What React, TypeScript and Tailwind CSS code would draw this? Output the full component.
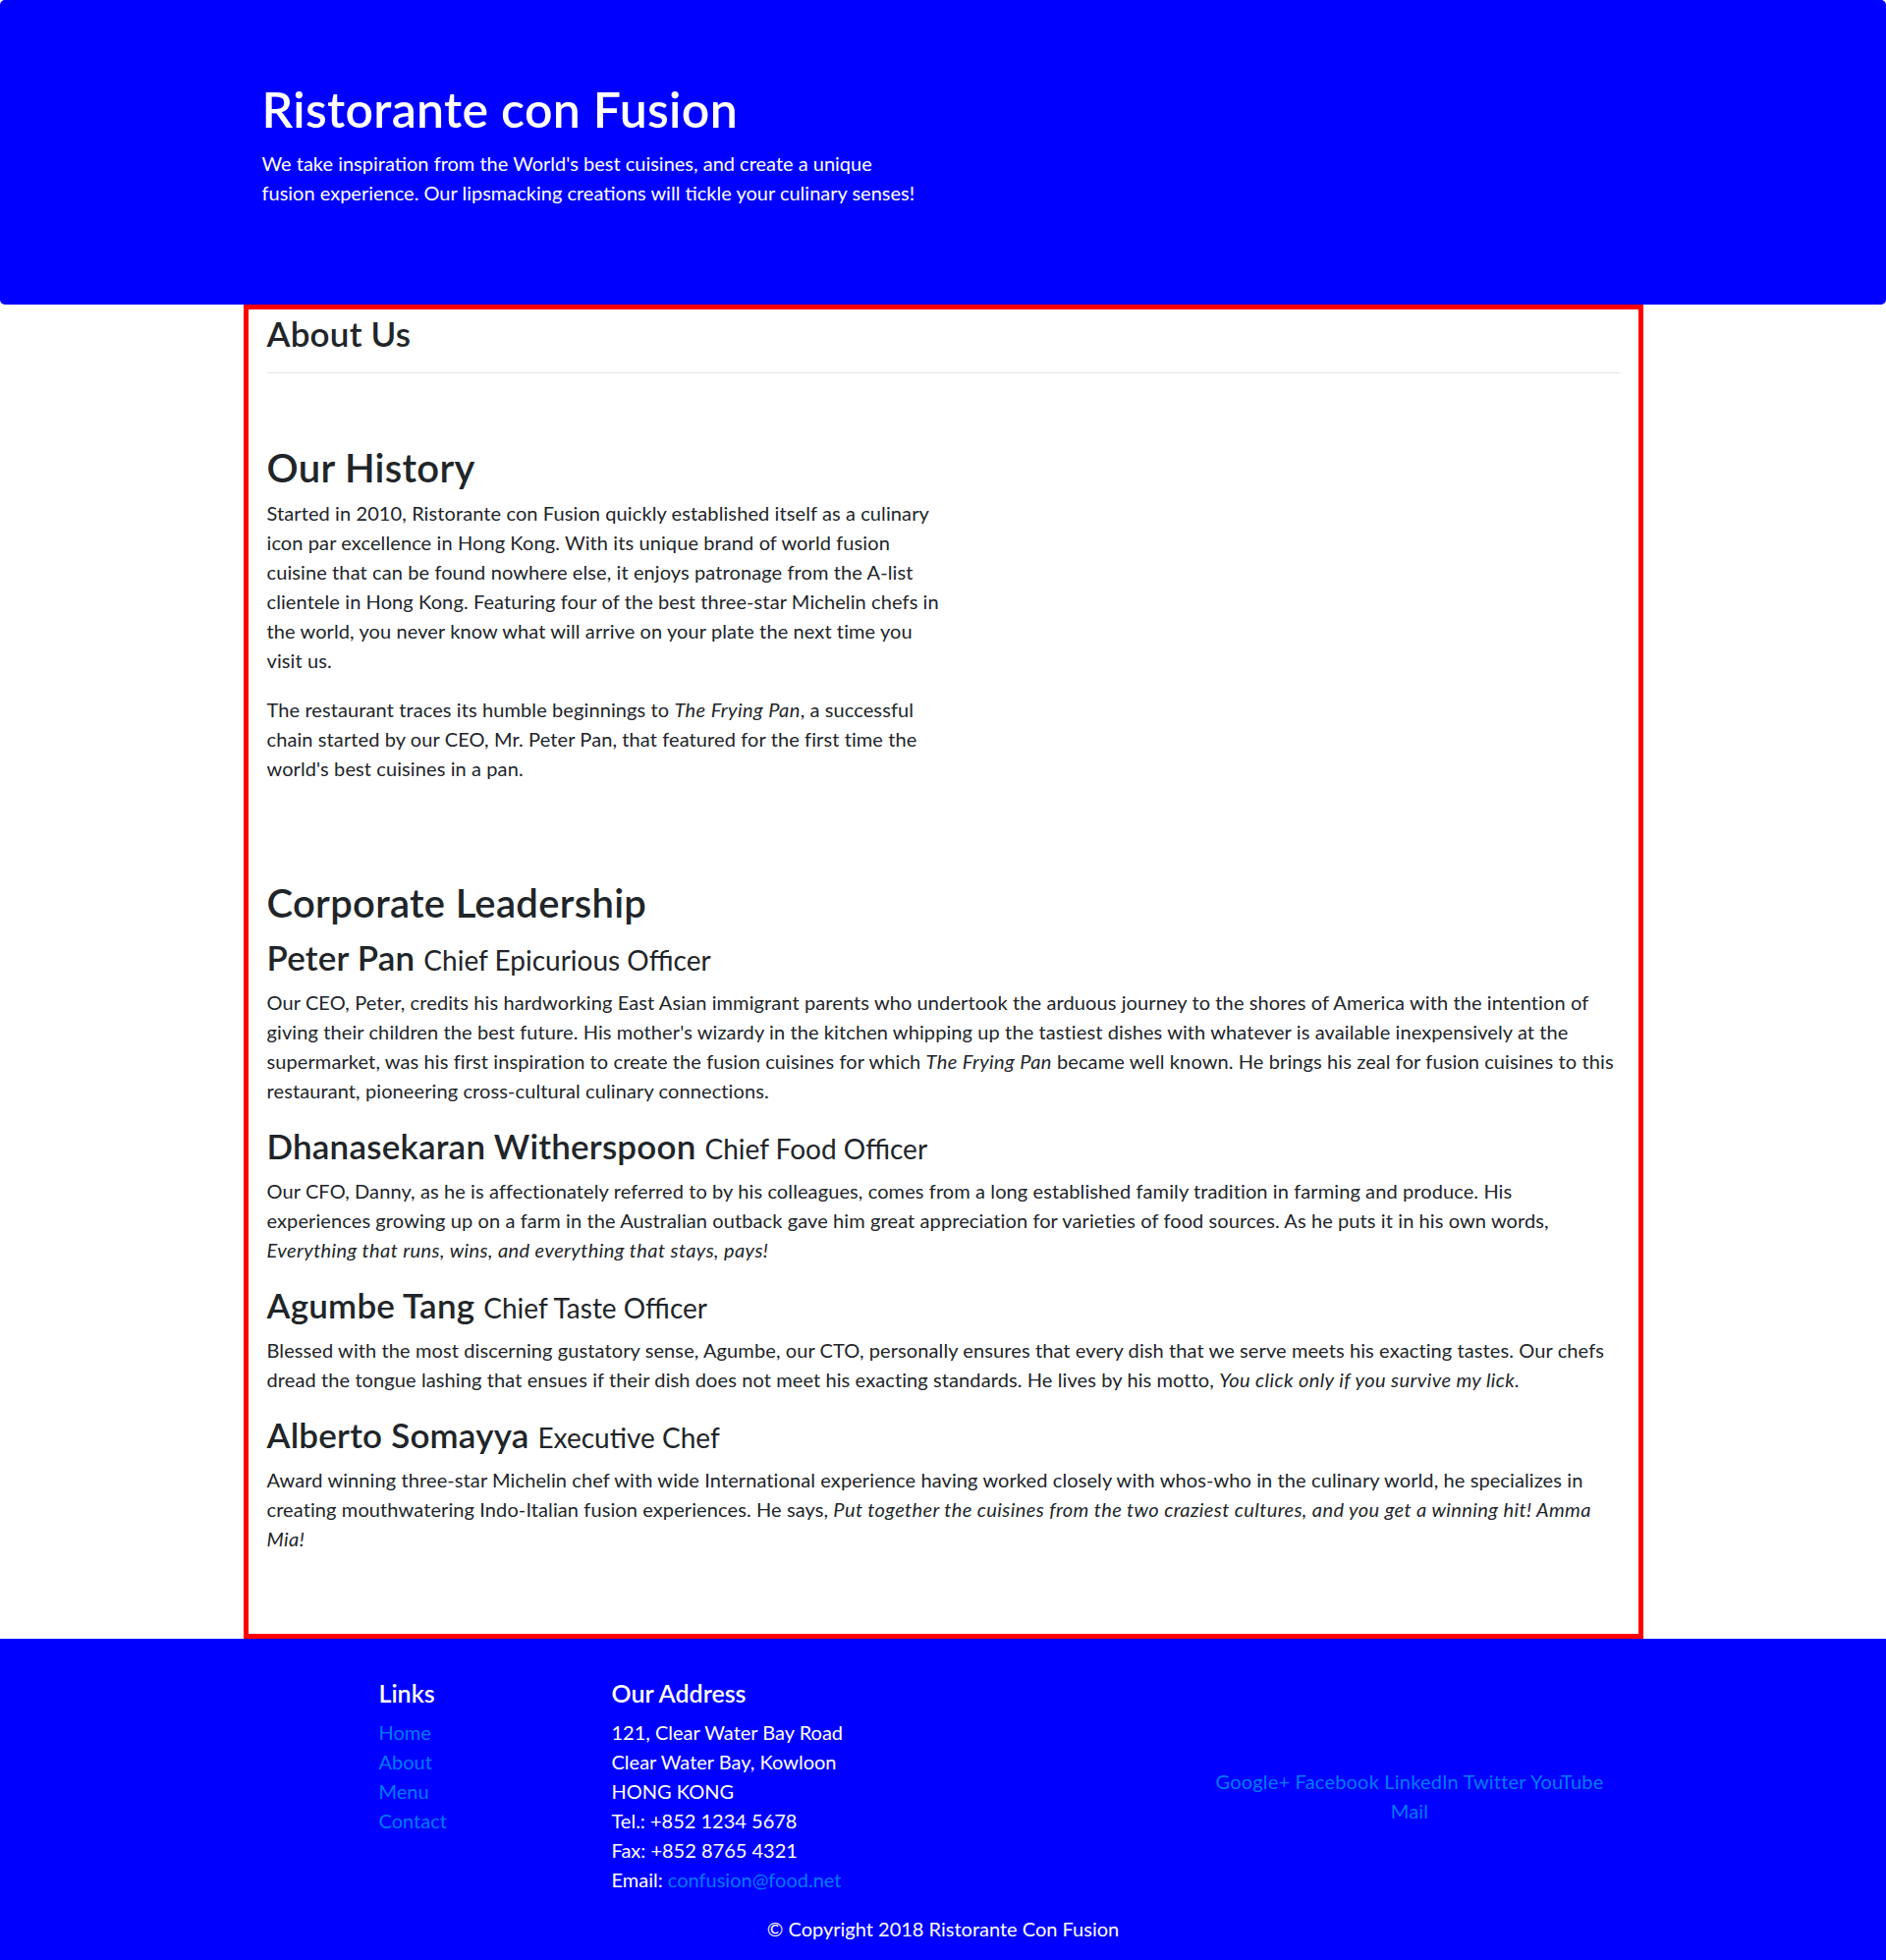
import React from "react";

const leaders = [
  {
    name: "Peter Pan",
    role: "Chief Epicurious Officer",
    text: (
      <>
        Our CEO, Peter, credits his hardworking East Asian immigrant parents who undertook the arduous journey to the
        shores of America with the intention of giving their children the best future. His mother's wizardy in the
        kitchen whipping up the tastiest dishes with whatever is available inexpensively at the supermarket, was his
        first inspiration to create the fusion cuisines for which <em>The Frying Pan</em> became well known. He brings
        his zeal for fusion cuisines to this restaurant, pioneering cross-cultural culinary connections.
      </>
    ),
  },
  {
    name: "Dhanasekaran Witherspoon",
    role: "Chief Food Officer",
    text: (
      <>
        Our CFO, Danny, as he is affectionately referred to by his colleagues, comes from a long established family
        tradition in farming and produce. His
        <br />
        experiences growing up on a farm in the Australian outback gave him great appreciation for varieties of food
        sources. As he puts it in his own words, <em>Everything that runs, wins, and everything that stays, pays!</em>
      </>
    ),
  },
  {
    name: "Agumbe Tang",
    role: "Chief Taste Officer",
    text: (
      <>
        Blessed with the most discerning gustatory sense, Agumbe, our CTO, personally ensures that every dish that we
        serve meets his exacting tastes. Our chefs dread the tongue lashing that ensues if their dish does not meet his
        exacting standards. He lives by his motto, <em>You click only if you survive my lick.</em>
      </>
    ),
  },
  {
    name: "Alberto Somayya",
    role: "Executive Chef",
    text: (
      <>
        Award winning three-star Michelin chef with wide International experience having worked closely with whos-who in
        the culinary world, he specializes in creating mouthwatering Indo-Italian fusion experiences. He says,{" "}
        <em>
          Put together the cuisines from the two craziest cultures, and you get a winning hit! Amma
          <br />
          Mia!
        </em>
      </>
    ),
  },
];

const App = () => {
  return (
    <div className="font-['Lato',sans-serif] text-[20px] leading-[30px] text-[#212529] bg-white">
      {/* jumbotron */}
      <header className="bg-[#0000ff] rounded-[5px] h-[310px]">
        <div className="w-[1425px] mx-auto px-[19px] pt-[81px]">
          <h1 className="text-[50px] leading-[60px] font-semibold tracking-[0.3px] text-white mb-[10px]">
            Ristorante con Fusion
          </h1>
          <p className="w-[675px] text-white">
            We take inspiration from the World's best cuisines, and create a unique fusion experience. Our lipsmacking
            creations will tickle your culinary senses!
          </p>
        </div>
      </header>

      <main className="w-[1425px] mx-auto border-[5px] border-[#ff0000] px-[19px] pt-[3px] pb-[62px] tracking-[0.1px] [&_em]:tracking-[0.4px]">
        <h3 className="text-[35px] leading-[42px] font-semibold tracking-[0.2px]">About Us</h3>
        <hr className="mt-[19px] border-t border-[#e5e5e5]" />

        <section className="mt-[72px]">
          <h2 className="text-[40px] leading-[48px] font-semibold tracking-[0.3px] mb-[7px]">Our History</h2>
          <div className="w-[692px]">
            <p className="mb-[20px]">
              Started in 2010, Ristorante con Fusion quickly established itself as a culinary icon par excellence in Hong
              Kong. With its unique brand of world fusion cuisine that can be found nowhere else, it enjoys patronage
              from the A-list clientele in Hong Kong. Featuring four of the best three-star Michelin chefs in the world,
              you never know what will arrive on your plate the next time you visit us.
            </p>
            <p>
              The restaurant traces its humble beginnings to <em>The Frying Pan</em>, a successful chain started by our
              CEO, Mr. Peter Pan, that featured for the first time the world's best cuisines in a pan.
            </p>
          </div>
        </section>

        <section className="mt-[98px]">
          <h2 className="text-[40px] leading-[48px] font-semibold tracking-[0.3px] mb-[10px]">Corporate Leadership</h2>
          <ul>
            {leaders.map((l) => (
              <li key={l.name}>
                <h3 className="text-[35px] leading-[42px] font-semibold tracking-[0.2px] mb-[7px]">
                  {l.name} <small className="text-[28px] font-normal tracking-normal">{l.role}</small>
                </h3>
                <p className="mb-[20px]">{l.text}</p>
              </li>
            ))}
          </ul>
        </section>
      </main>

      <footer className="bg-[#0000ff] text-white pt-[40px] pb-[19px]">
        <div className="w-[1425px] mx-auto flex">
          <div className="ml-[119px] w-[237px] px-[19px]">
            <h5 className="text-[25px] leading-[30px] font-semibold mb-[10px]">Links</h5>
            <ul className="text-[#007bff]">
              <li>Home</li>
              <li>About</li>
              <li>Menu</li>
              <li>Contact</li>
            </ul>
          </div>
          <div className="w-[594px] px-[19px]">
            <h5 className="text-[25px] leading-[30px] font-semibold mb-[10px]">Our Address</h5>
            <address className="not-italic mb-[20px]">
              121, Clear Water Bay Road
              <br />
              Clear Water Bay, Kowloon
              <br />
              HONG KONG
              <br />
              Tel.: +852 1234 5678
              <br />
              Fax: +852 8765 4321
              <br />
              Email: <span className="text-[#007bff]">confusion@food.net</span>
            </address>
          </div>
          <div className="w-[475px] px-[19px] self-center text-center text-[#007bff] tracking-[0.2px]">
            Google+ Facebook LinkedIn Twitter YouTube
            <br />
            Mail
          </div>
        </div>
        <p className="text-center">© Copyright 2018 Ristorante Con Fusion</p>
      </footer>
    </div>
  );
};

export default App;
